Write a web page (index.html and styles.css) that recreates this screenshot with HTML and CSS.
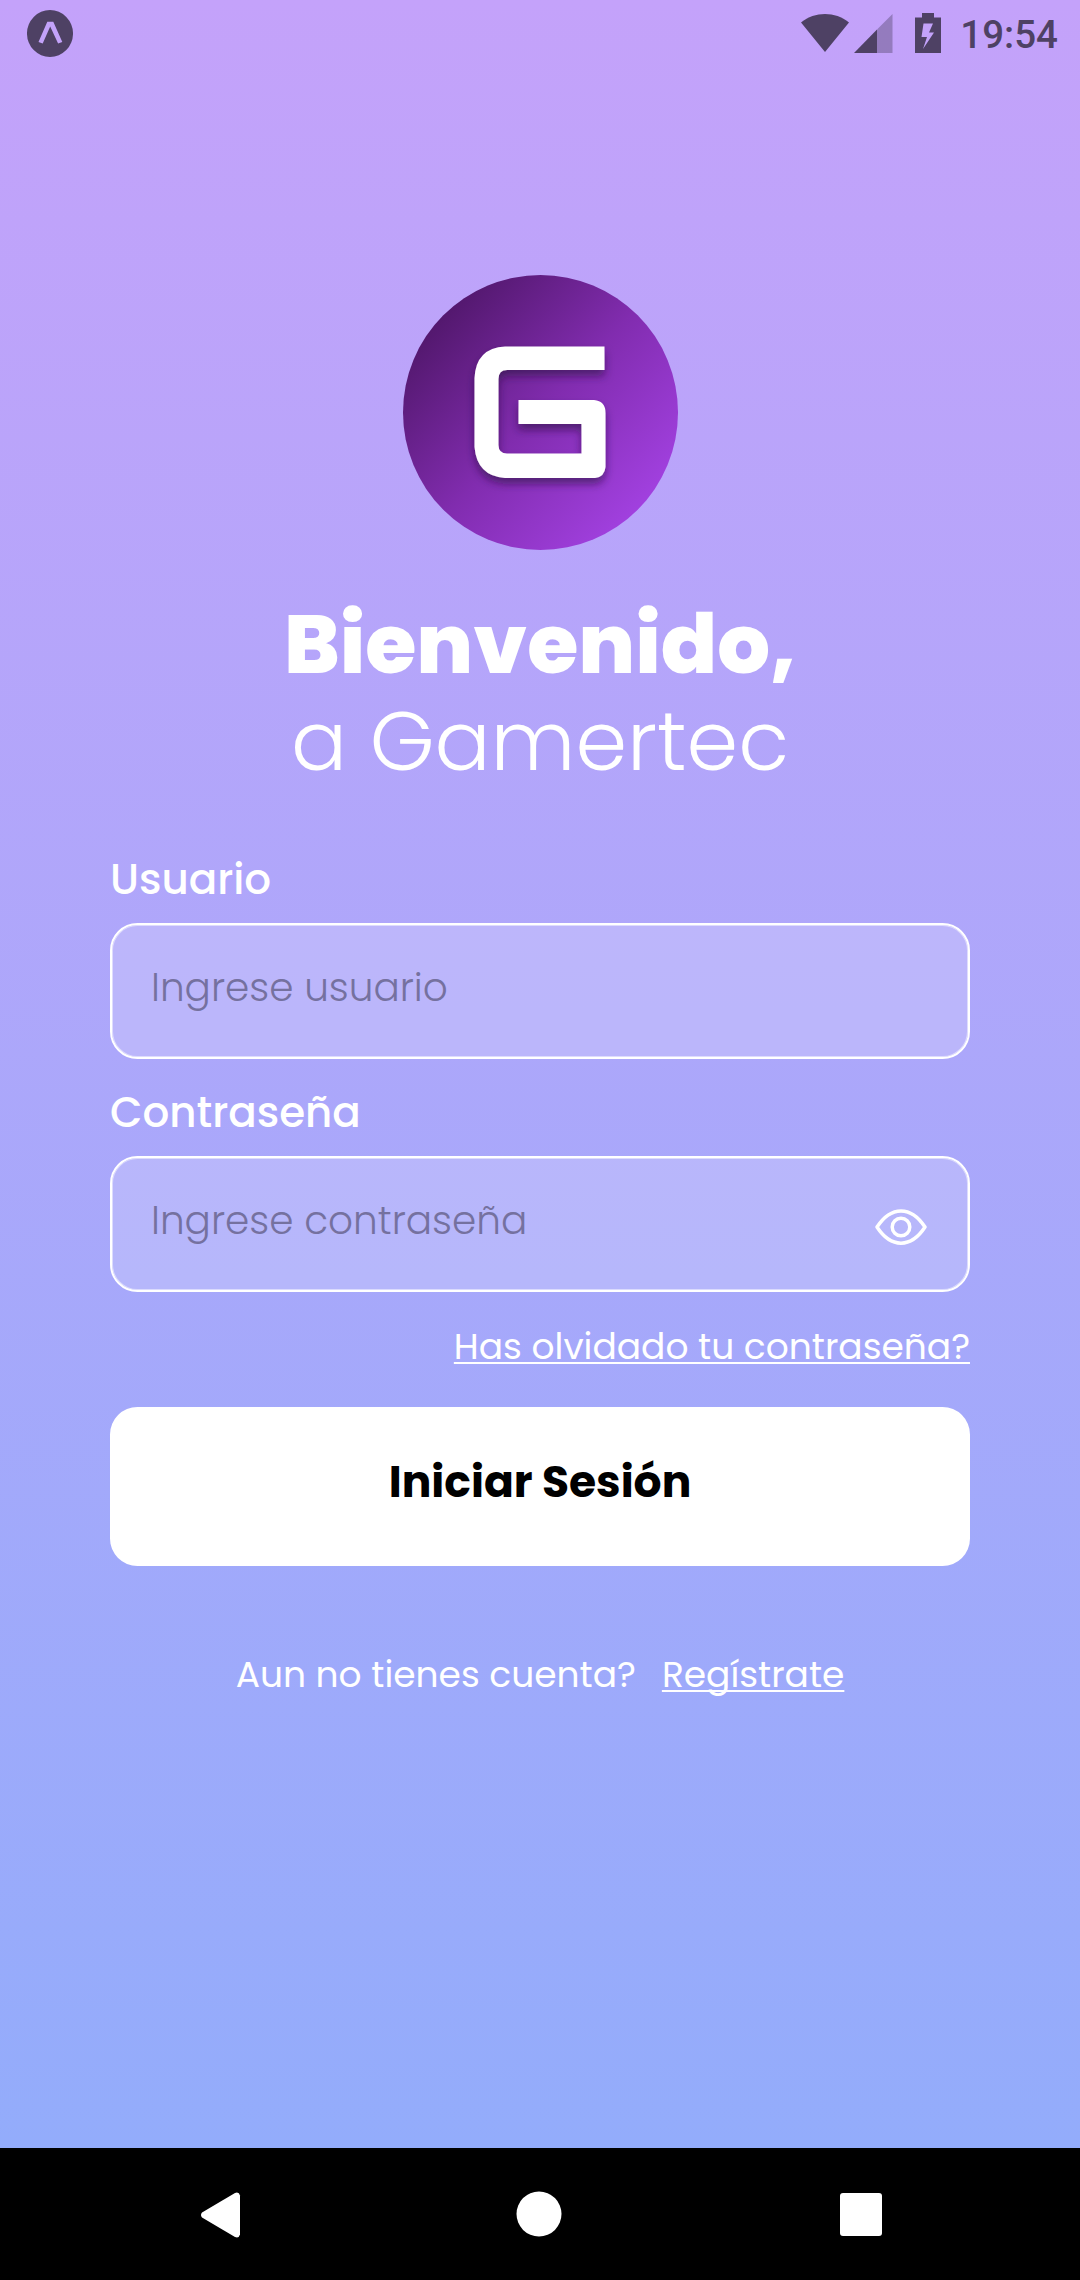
FILE: index.html
```html
<!DOCTYPE html>
<html lang="es">
<head>
<meta charset="utf-8">
<title>Gamertec</title>
<link rel="stylesheet" href="styles.css">
</head>
<body>
<div class="screen">
  <header class="status">
    <svg class="status-app" width="46" height="47" viewBox="0 0 46 47"><path fill-rule="evenodd" d="M23 0a23 23.5 0 1 0 0 47a23 23.5 0 1 0 0-47zM20.300 11.700h6l9 20.300-4.200 1.600L23.200 16.500 15.700 33.600 11.500 32z"/></svg>
    <div class="status-right">
      <svg class="wifi" width="48" height="38" viewBox="0 0 48 38"><path d="M0 8.500C14-2.800 34-2.800 48 8.500L24 38z"/></svg>
      <svg class="signal" width="39" height="39" viewBox="0 0 39 39"><path opacity=".4" d="M23 15.500L38.500 0v39H23z"/><path d="M0 39L23 15.500V39z"/></svg>
      <svg class="battery" width="26" height="40" viewBox="0 0 26 40"><path fill-rule="evenodd" d="M7 0h12v4.500h7V40H0V4.500h7zM8.500 10.500L6.500 24h5.500L8 36 19 19.500h-5L18 10.500z"/></svg>
      <span class="clock">19:54</span>
    </div>
  </header>
  <main class="login">
    <svg class="logo" width="275" height="275" viewBox="0 0 275 275">
      <defs>
        <linearGradient id="disc" x1="0.13" y1="0.16" x2="0.87" y2="0.84"><stop offset="0" stop-color="#53186e"/><stop offset=".5" stop-color="#812caf"/><stop offset="1" stop-color="#a140df"/></linearGradient>
        <filter id="drop" x="-20%" y="-20%" width="140%" height="150%"><feDropShadow dx="0" dy="6" stdDeviation="4" flood-color="#2b0845" flood-opacity=".6"/></filter>
      </defs>
      <circle cx="137.500" cy="137.500" r="137.500" fill="url(#disc)"/>
      <path filter="url(#drop)" fill="#fff" d="M201.500 71.500V95H104Q95.500 95 95.500 104V170Q95.500 178.500 104 178.500H178.500V149H115.500V125H191Q202.500 126 202.500 138V192Q201.500 202 192 203H102Q74 201 71.500 172V103Q73 73 102 71.500z"/>
    </svg>
    <h1 class="title"><span class="title-strong">Bienvenido,</span><span class="title-light">a Gamertec</span></h1>
    <div class="field">
      <span class="label">Usuario</span>
      <div class="input"><span class="placeholder">Ingrese usuario</span></div>
    </div>
    <div class="field">
      <span class="label">Contraseña</span>
      <div class="input"><span class="placeholder">Ingrese contraseña</span>
        <svg class="eye" width="52" height="36" viewBox="0 0 52 36"><path d="M2 18C16-3.500 36-3.500 50 18C36 39.500 16 39.500 2 18z"/><circle cx="26" cy="18" r="8.800"/></svg>
      </div>
    </div>
    <a class="link forgot">Has olvidado tu contraseña?</a>
    <button class="submit">Iniciar Sesión</button>
    <p class="register"><span>Aun no tienes cuenta?</span><a class="link">Regístrate</a></p>
  </main>
  <nav class="navbar">
    <svg class="nav-back" width="45" height="47" viewBox="0 0 45 47"><path d="M42 4.500V43.500Q41 47.500 37 46L4 26.500Q2 24 4 21.500L37 2Q41 .5 42 4.500z"/></svg>
    <svg class="nav-home" width="46" height="46" viewBox="0 0 46 46"><circle cx="23" cy="23" r="22.500"/></svg>
    <svg class="nav-recent" width="42" height="43" viewBox="0 0 42 43"><rect width="42" height="43" rx="3"/></svg>
  </nav>
</div>
</body>
</html>
```
FILE: styles.css
```css
* { box-sizing: border-box; }
body { margin: 0; }
.screen {
  display: flex;
  flex-direction: column;
  width: 1080px;
  height: 2280px;
  background: linear-gradient(#c4a2fa 0, #93acfb 2148px);
  color: #fff;
  font-family: Poppins, Inter, "Open Sans", sans-serif;
}
.status {
  display: flex;
  justify-content: space-between;
  align-items: center;
  height: 66px;
  padding: 0 22px 0 27px;
  fill: #4e4164;
  color: #4e4164;
}
.status-right { display: flex; align-items: center; }
.signal { margin-left: 5px; }
.battery { margin-left: 22px; }
.clock {
  margin-left: 19px;
  padding-top: 3px;
  font: 500 38.500px/60px Roboto, sans-serif;
}
.login {
  display: flex;
  flex: 1;
  flex-direction: column;
  padding: 209px 110px 0;
}
.logo { align-self: center; }
.title {
  display: flex;
  flex-direction: column;
  align-items: center;
  margin: 46px 0 60px;
  font-size: 83px;
  line-height: 97px;
}
.title-strong { font-weight: 800; }
.title-light { font-weight: 300; }
.field {
  display: flex;
  flex-direction: column;
  gap: 13px;
  margin-bottom: 24px;
}
.label { font-weight: 500; font-size: 42px; line-height: 60px; }
.input {
  display: flex;
  align-items: center;
  justify-content: space-between;
  height: 136px;
  padding: 0 41px 8px 39px;
  border: 2px solid #fff;
  border-radius: 27.500px;
  background: rgba(255, 255, 255, .18);
  box-shadow: inset 0 0 0 1px rgba(255, 255, 255, .5);
}
.placeholder { color: #75719f; font-weight: 300; font-size: 39px; }
.eye {
  margin-top: 13px;
  fill: none;
  stroke: #fff;
  stroke-width: 3.500;
  stroke-linejoin: round;
}
.link {
  text-decoration: underline;
  text-decoration-thickness: 2px;
  text-decoration-skip-ink: none;
  text-underline-offset: 3px;
}
.forgot { align-self: flex-end; margin-top: 5px; font-size: 36px; line-height: 52px; }
.submit {
  height: 159px;
  margin-top: 34px;
  padding: 0 0 9px;
  border: 0;
  border-radius: 27.500px;
  background: #fff;
  color: #000;
  font: 700 44px/60px Poppins, Inter, "Open Sans", sans-serif;
}
.register {
  display: flex;
  justify-content: center;
  gap: 26px;
  margin: 83px 0 0;
  font-size: 36px;
  line-height: 52px;
}
.navbar {
  display: flex;
  align-items: center;
  height: 132px;
  padding-left: 198px;
  background: #000;
  fill: #fff;
}
.nav-home { margin: 0 0 1px 273px; }
.nav-recent { margin-left: 278px; }
```
